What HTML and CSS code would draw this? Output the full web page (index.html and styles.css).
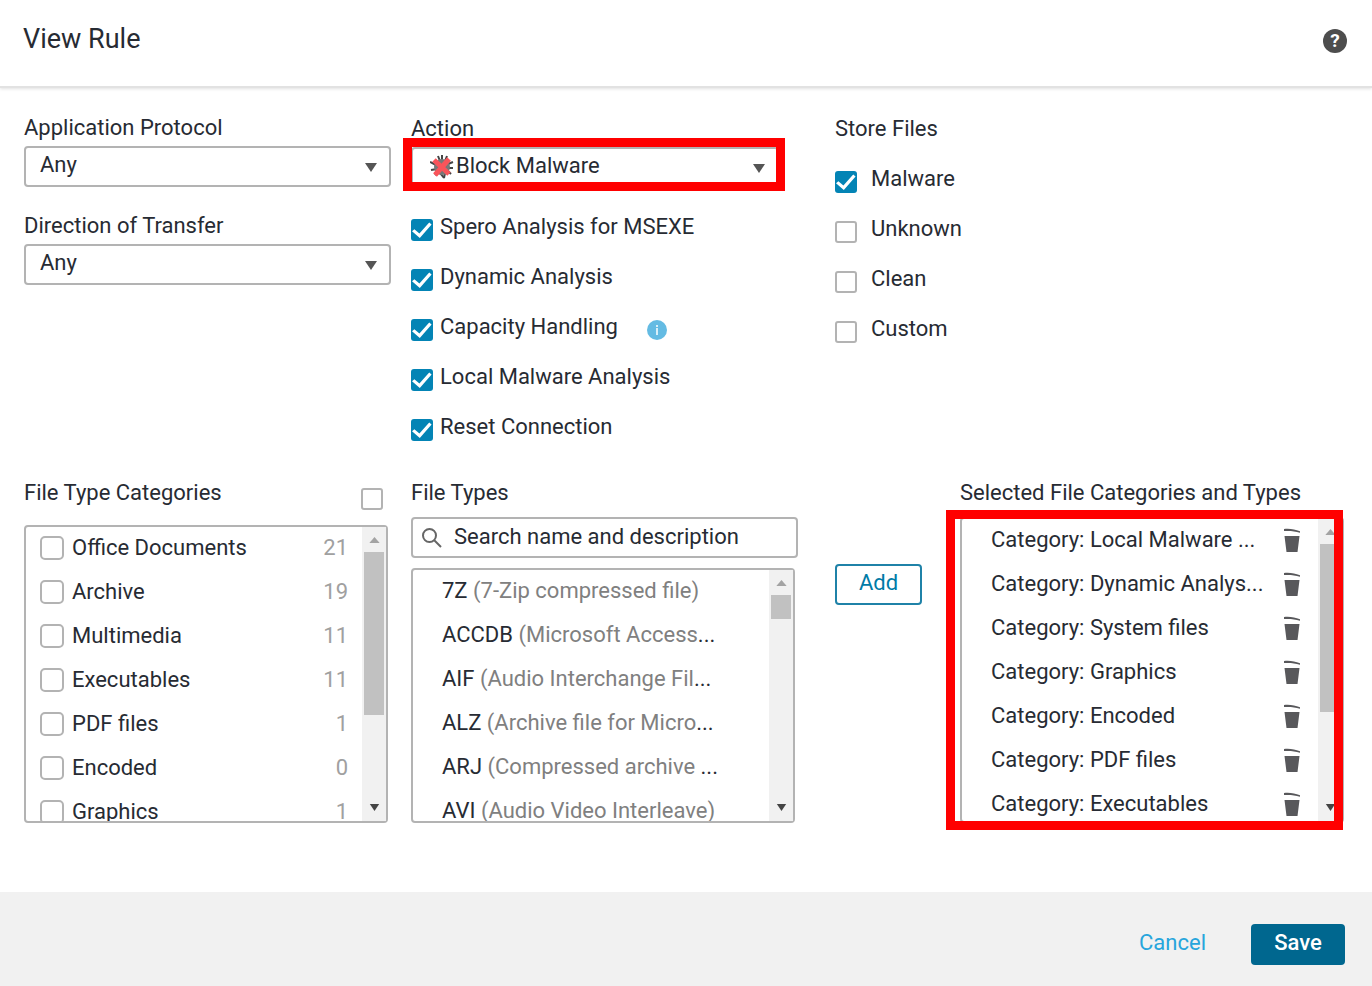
FILE: index.html
```html
<!DOCTYPE html>
<html lang="en">
<head>
    <meta charset="UTF-8">
    <meta name="viewport" content="width=device-width, initial-scale=1.0">
    <title>View Rule</title>
    <link rel="stylesheet" href="styles.css">
</head>
<body>
    <svg class="sprite" aria-hidden="true">
        <symbol id="trash" viewBox="0 0 18 26">
            <path d="M1 2C7 1.400 12 2.400 17 4.200V5.800C12 4.200 7 3.600 1 4z"/>
            <path d="M1.500 9h15l-2 16h-11z"/>
        </symbol>
        <symbol id="up" viewBox="0 0 12 7"><path d="M6 0l6 7H0z"/></symbol>
        <symbol id="down" viewBox="0 0 12 9"><path d="M0 0h12L6 9z"/></symbol>
    </svg>

    <header class="header">
        <h1>View Rule</h1>
        <button class="help" type="button" aria-label="Help">?</button>
    </header>

    <main class="content">
        <section class="settings">
            <div class="column">
                <label class="title" for="protocol">Application Protocol</label>
                <div class="select">
                    <select id="protocol"><option>Any</option></select>
                    <svg class="arrow"><use href="#down"/></svg>
                </div>
                <label class="title second" for="direction">Direction of Transfer</label>
                <div class="select">
                    <select id="direction"><option>Any</option></select>
                    <svg class="arrow"><use href="#down"/></svg>
                </div>
            </div>

            <div class="column lower">
                <label class="title" for="action">Action</label>
                <div class="select action">
                    <select id="action"><option>Block Malware</option></select>
                    <svg class="malware" viewBox="0 0 24 24">
                        <path d="M8 1l2 5M12 0v5M17 1l-2 5M0 7l6 3M1 15l6-1M5 20l4-4M10 18l4 5M15 18l-1 5M18 16l3 3M18 13h5M18 9l5-2" stroke="#444" stroke-width="2" fill="none"/>
                        <circle cx="12" cy="12" r="8" fill="#777"/>
                        <path d="M4 5l15 14M19 4L5 20" stroke="#f9545a" stroke-width="5"/>
                    </svg>
                    <svg class="arrow"><use href="#down"/></svg>
                    <span class="highlight"></span>
                </div>
                <div class="checks">
                    <label><input type="checkbox" checked><span>Spero Analysis for MSEXE</span></label>
                    <label><input type="checkbox" checked><span>Dynamic Analysis</span></label>
                    <label><input type="checkbox" checked><span>Capacity Handling</span>
                        <svg class="info" viewBox="0 0 20 20">
                            <circle cx="10" cy="10" r="10" fill="#64bbe3"/>
                            <path d="M9 5h2v2H9zM9 8h2v7H9z" fill="#d8eff9"/>
                        </svg>
                    </label>
                    <label><input type="checkbox" checked><span>Local Malware Analysis</span></label>
                    <label><input type="checkbox" checked><span>Reset Connection</span></label>
                </div>
            </div>

            <div class="column lower store">
                <h2 class="title">Store Files</h2>
                <div class="checks">
                    <label><input type="checkbox" checked><span>Malware</span></label>
                    <label><input type="checkbox"><span>Unknown</span></label>
                    <label><input type="checkbox"><span>Clean</span></label>
                    <label><input type="checkbox"><span>Custom</span></label>
                </div>
            </div>
        </section>

        <section class="files">
            <div class="column categories">
                <div class="list-head">
                    <h2 class="title">File Type Categories</h2>
                    <input type="checkbox" aria-label="Select all categories">
                </div>
                <div class="list">
                    <ul>
                        <li><label><input type="checkbox">Office Documents</label><span class="count">21</span></li>
                        <li><label><input type="checkbox">Archive</label><span class="count">19</span></li>
                        <li><label><input type="checkbox">Multimedia</label><span class="count">11</span></li>
                        <li><label><input type="checkbox">Executables</label><span class="count">11</span></li>
                        <li><label><input type="checkbox">PDF files</label><span class="count">1</span></li>
                        <li><label><input type="checkbox">Encoded</label><span class="count">0</span></li>
                        <li><label><input type="checkbox">Graphics</label><span class="count">1</span></li>
                    </ul>
                    <div class="scrollbar">
                        <svg class="up"><use href="#up"/></svg>
                        <div class="track"><div class="thumb"></div></div>
                        <svg class="down"><use href="#down"/></svg>
                    </div>
                </div>
            </div>

            <div class="column types">
                <label class="title" for="search">File Types</label>
                <div class="search">
                    <svg viewBox="0 0 20 20" fill="none" stroke="#666" stroke-width="2">
                        <circle cx="7.500" cy="7.500" r="6.500"/>
                        <path d="M12 12l7 7"/>
                    </svg>
                    <input type="text" id="search" placeholder="Search name and description">
                </div>
                <div class="list">
                    <ul>
                        <li><p>7Z <span>(7-Zip compressed file)</span></p></li>
                        <li><p>ACCDB <span>(Microsoft Access</span>...</p></li>
                        <li><p>AIF <span>(Audio Interchange Fil</span>...</p></li>
                        <li><p>ALZ <span>(Archive file for Micro</span>...</p></li>
                        <li><p>ARJ <span>(Compressed archive </span>...</p></li>
                        <li><p>AVI <span>(Audio Video Interleave)</span></p></li>
                    </ul>
                    <div class="scrollbar">
                        <svg class="up"><use href="#up"/></svg>
                        <div class="track"><div class="thumb"></div></div>
                        <svg class="down"><use href="#down"/></svg>
                    </div>
                </div>
            </div>

            <div class="column add">
                <button class="btn-add" type="button">Add</button>
            </div>

            <div class="column selected">
                <h2 class="title">Selected File Categories and Types</h2>
                <div class="list">
                    <ul>
                        <li><p>Category: Local Malware ...</p><button type="button" aria-label="Delete"><svg><use href="#trash"/></svg></button></li>
                        <li><p>Category: Dynamic Analys...</p><button type="button" aria-label="Delete"><svg><use href="#trash"/></svg></button></li>
                        <li><p>Category: System files</p><button type="button" aria-label="Delete"><svg><use href="#trash"/></svg></button></li>
                        <li><p>Category: Graphics</p><button type="button" aria-label="Delete"><svg><use href="#trash"/></svg></button></li>
                        <li><p>Category: Encoded</p><button type="button" aria-label="Delete"><svg><use href="#trash"/></svg></button></li>
                        <li><p>Category: PDF files</p><button type="button" aria-label="Delete"><svg><use href="#trash"/></svg></button></li>
                        <li><p>Category: Executables</p><button type="button" aria-label="Delete"><svg><use href="#trash"/></svg></button></li>
                    </ul>
                    <div class="scrollbar">
                        <svg class="up"><use href="#up"/></svg>
                        <div class="track"><div class="thumb"></div></div>
                        <svg class="down"><use href="#down"/></svg>
                    </div>
                    <span class="highlight"></span>
                </div>
            </div>
        </section>
    </main>

    <footer class="footer">
        <a href="#">Cancel</a>
        <button class="btn-save" type="button">Save</button>
    </footer>
</body>
</html>
```
FILE: styles.css
```css
* {
    box-sizing: border-box;
}
body {
    display: flex;
    flex-direction: column;
    min-height: 100vh;
    margin: 0;
    background-color: #fff;
    color: #272b33;
    font-family: Roboto, "Liberation Sans", sans-serif;
    font-size: 22px;
    line-height: 24px;
}
h1, h2, p, ul {
    margin: 0;
    padding: 0;
    font-weight: normal;
}
ul {
    list-style: none;
}
button, input, select {
    font: inherit;
    color: inherit;
}
button {
    cursor: pointer;
}
.sprite {
    display: none;
}
.header {
    display: flex;
    justify-content: space-between;
    align-items: center;
    height: 88px;
    padding: 0 25px 4px 23px;
    border-bottom: 2px solid #e2e2e2;
    box-shadow: 0 1px 3px rgba(0,0,0,0.12);
}
.header h1 {
    font-size: 27px;
    line-height: 32px;
    padding-bottom: 4px;
}
.help {
    width: 24px;
    height: 24px;
    padding: 0;
    border: none;
    border-radius: 50%;
    background-color: #4d4d4d;
    color: #fff;
    font-size: 19px;
    font-weight: bold;
    line-height: 24px;
}
.content {
    padding: 28px 28px 0 24px;
}
.settings, .files {
    display: grid;
    grid-template-columns: 367fr 387fr 122px 384fr;
    column-gap: 20px;
}
.title {
    display: block;
    font-size: 22px;
    line-height: 24px;
    margin-bottom: 6px;
    white-space: nowrap;
}
.second {
    margin-top: 27px;
}
.lower {
    padding-top: 1px;
}
.store {
    grid-column: 3 / 5;
    padding-left: 17px;
}
.select {
    position: relative;
}
.select select {
    appearance: none;
    display: block;
    width: 100%;
    height: 41px;
    padding: 0 40px 3px 14px;
    border: 2px solid #b3b3b3;
    border-radius: 4px;
    background-color: #fff;
}
.arrow {
    position: absolute;
    right: 14px;
    top: 17px;
    width: 12px;
    height: 9px;
    fill: #555;
    pointer-events: none;
}
.action {
    width: 95%;
}
.action select {
    padding-left: 43px;
}
.malware {
    position: absolute;
    left: 19px;
    top: 8px;
    width: 24px;
    height: 24px;
}
.highlight {
    position: absolute;
    border: 9px solid #f00;
    pointer-events: none;
}
.action .highlight {
    inset: -9px -6px -3px -8px;
}
input[type="checkbox"] {
    appearance: none;
    flex: none;
    width: 22px;
    height: 22px;
    margin: 0;
    border: 2px solid #b3b3b3;
    border-radius: 3px;
    background-color: #fff;
}
input[type="checkbox"]:checked {
    display: grid;
    place-items: center;
    border: none;
    background-color: #0384b5;
}
input[type="checkbox"]:checked::before {
    content: "";
    width: 20px;
    height: 18px;
    background-color: #fff;
    clip-path: polygon(0 57%, 12% 46%, 37% 70%, 86% 8%, 98% 19%, 39% 94%);
}
.checks {
    padding-top: 17px;
}
.checks label {
    display: flex;
    align-items: center;
    gap: 7px;
    height: 50px;
}
.checks label span {
    padding-bottom: 6px;
}
.store .checks {
    padding-top: 10px;
}
.store .checks label {
    gap: 14px;
}
.info {
    width: 20px;
    height: 20px;
    margin-left: 22px;
}
.files {
    height: 342px;
    margin-top: 26px;
}
.files .column {
    display: flex;
    flex-direction: column;
    min-height: 0;
    min-width: 0;
}
.files .title {
    margin-bottom: 12px;
}
.list-head {
    display: flex;
    justify-content: space-between;
    height: 44px;
    padding-right: 8px;
}
.list-head input {
    margin-top: 7px;
}
.list {
    position: relative;
    display: flex;
    flex: 1;
    min-height: 0;
    margin-right: 3px;
    border: 2px solid #b3b3b3;
    border-radius: 4px;
}
.list ul {
    flex: 1;
    min-width: 0;
    overflow-y: auto;
    scrollbar-width: none;
}
.list li {
    display: flex;
    justify-content: space-between;
    align-items: center;
    height: 44px;
    padding: 0 14px 2px;
    white-space: nowrap;
}
.categories li label {
    display: flex;
    align-items: center;
    gap: 8px;
}
.categories li input {
    width: 24px;
    height: 24px;
    border-radius: 5px;
}
.count {
    color: #a0a0a0;
}
.types li, .selected li {
    padding-left: 29px;
}
.types li span {
    color: #808080;
}
.scrollbar {
    display: flex;
    flex-direction: column;
    align-items: center;
    width: 24px;
    padding: 10px 0;
    background-color: #f1f1f1;
}
.scrollbar svg {
    flex: none;
    width: 11px;
}
.up {
    height: 6px;
    fill: #a3a3a3;
}
.down {
    height: 7px;
    fill: #444;
}
.track {
    flex: 1;
    width: 20px;
    margin: 9px 0;
}
.thumb {
    height: 67%;
    background-color: #c1c1c1;
}
.types .thumb {
    height: 12%;
}
.search {
    display: flex;
    align-items: center;
    gap: 12px;
    height: 41px;
    margin-bottom: 10px;
    padding: 0 9px;
    border: 2px solid #b3b3b3;
    border-radius: 4px;
}
.search svg {
    flex: none;
    width: 20px;
    height: 20px;
}
.search input {
    flex: 1;
    min-width: 0;
    padding: 0 0 2px;
    border: none;
    outline: none;
}
.search input::placeholder {
    color: #272b33;
    opacity: 1;
}
.add {
    padding: 83px 0 0 17px;
}
.btn-add {
    width: 87px;
    height: 41px;
    padding: 0 0 3px;
    border: 2px solid #1f82a8;
    border-radius: 4px;
    background-color: #fff;
    color: #007ba7;
}
.selected .list {
    margin-right: 0;
}
.selected li {
    padding-right: 17px;
}
.selected li button {
    width: 18px;
    height: 26px;
    padding: 0;
    border: none;
    background: none;
}
.selected li svg {
    display: block;
    width: 18px;
    height: 26px;
    fill: #58585b;
}
.selected .highlight {
    inset: -9px -1px -9px -16px;
}
.footer {
    display: flex;
    justify-content: flex-end;
    align-items: center;
    gap: 45px;
    height: 94px;
    margin-top: auto;
    padding: 11px 27px 0 24px;
    background-color: #f1f1f1;
}
.footer a {
    padding-bottom: 3px;
    color: #27a5dc;
    text-decoration: none;
}
.btn-save {
    width: 94px;
    height: 41px;
    padding: 0 0 3px;
    border: none;
    border-radius: 4px;
    background-color: #00678f;
    color: #fff;
    font-weight: 500;
}
```
